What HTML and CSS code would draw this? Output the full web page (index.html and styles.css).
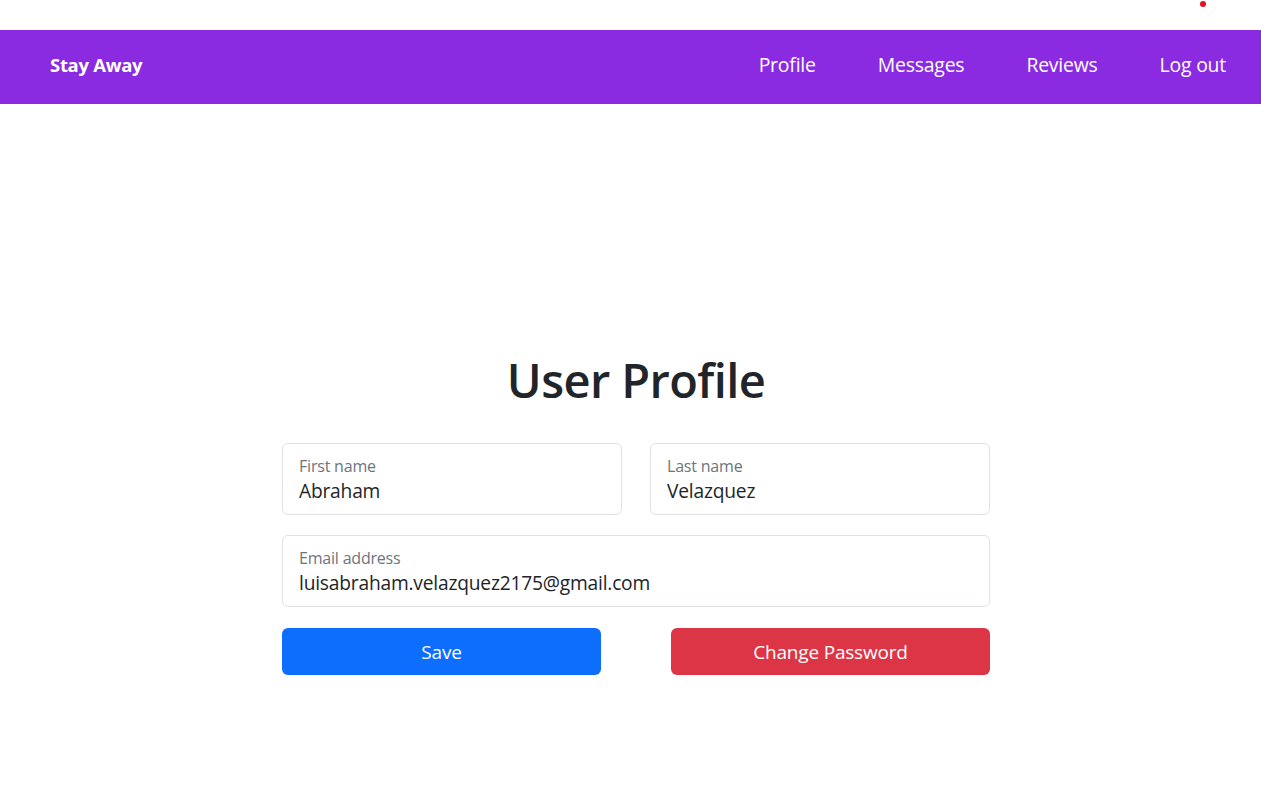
FILE: index.html
```html
<!DOCTYPE html>
<html lang="en">
<head>
<meta charset="utf-8">
<title>User Profile - Stay Away</title>
<link rel="stylesheet" href="styles.css">
</head>
<body>
<div class="topstrip"><span class="dot"></span></div>
<nav class="navbar">
  <a class="brand" href="#">Stay Away</a>
  <ul class="links">
    <li><a href="#">Profile</a></li>
    <li><a href="#">Messages</a></li>
    <li><a href="#">Reviews</a></li>
    <li><a href="#">Log out</a></li>
  </ul>
</nav>
<main class="main">
  <div class="panel">
    <h1 class="title">User Profile</h1>
    <form class="form">
      <div class="row">
        <label class="field">
          <span class="label">First name</span>
          <input class="value" type="text" value="Abraham">
        </label>
        <label class="field">
          <span class="label">Last name</span>
          <input class="value" type="text" value="Velazquez">
        </label>
      </div>
      <label class="field">
        <span class="label">Email address</span>
        <input class="value" type="email" value="luisabraham.velazquez2175@gmail.com">
      </label>
      <div class="buttons">
        <button type="button" class="btn btn-save">Save</button>
        <button type="button" class="btn btn-danger">Change Password</button>
      </div>
    </form>
  </div>
</main>
</body>
</html>
```
FILE: styles.css
```css
* { box-sizing: border-box; }
html, body { margin: 0; padding: 0; }
body {
  font-family: "Open Sans", "Noto Sans", sans-serif;
  color: #212529;
  background: #fff;
  width: 1261px;
  height: 792px;
  overflow: hidden;
}
.topstrip {
  height: 30px;
  position: relative;
}
.dot {
  position: absolute;
  left: 1200px;
  top: 1px;
  width: 6px;
  height: 6px;
  border-radius: 50%;
  background: #e0141c;
}
.navbar {
  height: 74px;
  background: #8a2be2;
  display: flex;
  align-items: center;
  justify-content: space-between;
  padding: 0 35px 6px 50px;
}
.brand {
  color: #fff;
  text-decoration: none;
  font-weight: 700;
  font-size: 18.5px;
  letter-spacing: -0.3px;
}
.links {
  list-style: none;
  margin: 0;
  padding: 0;
  display: flex;
  gap: 62px;
}
.links a {
  color: #fff;
  text-decoration: none;
  font-size: 19.4px;
  letter-spacing: -0.2px;
}
.main {
  display: flex;
  justify-content: center;
  padding: 248px 0 0 11px;
}
.panel {
  width: 708px;
}
.title {
  margin: 0 0 35px;
  text-align: center;
  font-size: 47px;
  font-weight: 600;
  line-height: 1.2;
  letter-spacing: -0.6px;
  color: #212529;
}
.form {
  display: flex;
  flex-direction: column;
  gap: 20px;
}
.row {
  display: flex;
  gap: 28px;
}
.row .field { flex: 1; }
.field {
  display: flex;
  flex-direction: column;
  height: 72px;
  border: 1px solid #dee2e6;
  border-radius: 6px;
  padding: 11px 16px 0;
  background: #fff;
}
.label {
  font-size: 16px;
  color: #6c757d;
  line-height: 22px;
  letter-spacing: -0.2px;
}
.value {
  border: 0;
  padding: 0;
  margin: 0;
  outline: none;
  font-family: inherit;
  font-size: 19.2px;
  line-height: 28px;
  color: #212529;
  background: transparent;
  letter-spacing: -0.2px;
}
.buttons {
  display: flex;
  justify-content: space-between;
  margin-top: 1px;
}
.btn {
  width: 319px;
  height: 47px;
  border: 0;
  border-radius: 6px;
  color: #fff;
  font-family: inherit;
  font-size: 19px;
  letter-spacing: -0.2px;
  cursor: pointer;
}
.btn-save { background: #0d6efd; }
.btn-danger { background: #dc3545; }
```
